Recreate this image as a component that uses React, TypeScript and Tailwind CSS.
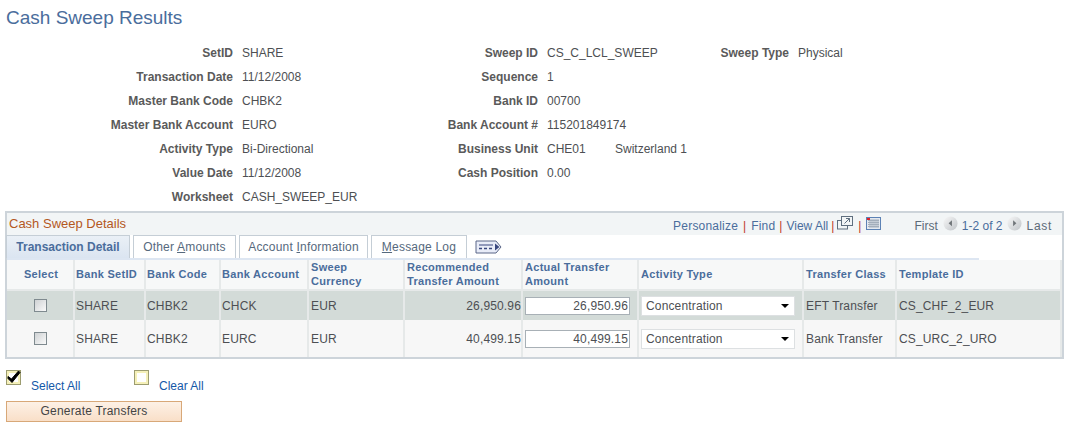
import React from 'react';

const font = { fontFamily: '"Liberation Sans", Arial, sans-serif' };

const summaryRows = [
  { label: 'SetID', value: 'SHARE', label2: 'Sweep ID', value2: 'CS_C_LCL_SWEEP', label3: 'Sweep Type', value3: 'Physical' },
  { label: 'Transaction Date', value: '11/12/2008', label2: 'Sequence', value2: '1' },
  { label: 'Master Bank Code', value: 'CHBK2', label2: 'Bank ID', value2: '00700' },
  { label: 'Master Bank Account', value: 'EURO', label2: 'Bank Account #', value2: '115201849174' },
  { label: 'Activity Type', value: 'Bi-Directional', label2: 'Business Unit', value2: 'CHE01', extra: 'Switzerland 1' },
  { label: 'Value Date', value: '11/12/2008', label2: 'Cash Position', value2: '0.00' },
  { label: 'Worksheet', value: 'CASH_SWEEP_EUR' },
];

const gridCols = 'grid grid-cols-[68px_71px_75px_88px_96px_118px_116px_165px_93px_1fr]';

const headers = [
  { text: 'Select', center: true },
  { text: 'Bank SetID', tight: true },
  { text: 'Bank Code', tight: true },
  { text: 'Bank Account', tight: true },
  { text: 'Sweep\nCurrency' },
  { text: 'Recommended\nTransfer Amount' },
  { text: 'Actual Transfer\nAmount' },
  { text: 'Activity Type' },
  { text: 'Transfer Class' },
  { text: 'Template ID' },
];

const rows = [
  { account: 'CHCK', recommended: '26,950.96', actual: '26,950.96', cls: 'EFT Transfer', template: 'CS_CHF_2_EUR', bg: 'bg-[#d3dbd8]', h: 'h-[29px]' },
  { account: 'EURC', recommended: '40,499.15', actual: '40,499.15', cls: 'Bank Transfer', template: 'CS_URC_2_URO', bg: 'bg-[#f7f7f7]', h: 'h-[37px]' },
];

const Checkbox = () => (
  <div className="w-[13px] h-[13px] border border-[#7f8a8f] bg-gradient-to-br from-[#cfd2d4] to-[#fafafa]" />
);

const Cell: React.FC<{ className?: string; tight?: boolean; children?: React.ReactNode }> = ({ className = '', tight, children }) => (
  <div className={`flex items-center border-r-2 border-[#e6e9e9] ${tight ? 'pl-[1px]' : 'pl-[2px]'} ${className}`}>{children}</div>
);

const NavArrow: React.FC<{ dir: 'left' | 'right' }> = ({ dir }) => (
  <svg width="15" height="15" viewBox="0 0 16 16" className="mb-[6px]">
    <defs>
      <linearGradient id={`nav-${dir}`} x1="0" y1="0" x2="1" y2="1">
        <stop offset="0" stopColor="#f8f8f8" />
        <stop offset="1" stopColor="#c0c4c8" />
      </linearGradient>
    </defs>
    <circle cx="8" cy="8" r="7.5" fill={`url(#nav-${dir})`} />
    <path d={dir === 'left' ? 'M9.5 4.5 L9.5 11 L6 7.8 Z' : 'M6.5 4.5 L6.5 11 L10 7.8 Z'} fill="#6f7478" />
  </svg>
);

const Tab: React.FC<{ width: string; children: React.ReactNode }> = ({ width, children }) => (
  <div className={`${width} h-[23px] mr-[3px] border border-b-0 border-[#c5ced6] bg-white flex items-center justify-center tracking-[0.2px] text-[#56697d]`}>
    {children}
  </div>
);

const Sep: React.FC<{ className?: string }> = ({ className = 'mx-[5px]' }) => <span className={`${className} text-[#c0392b]`}>|</span>;

export default function App() {
  return (
    <div className="w-[1072px] h-[426px] bg-white overflow-hidden text-[12px] text-[#4d4f53]" style={font}>
      <h1 className="pl-[6px] pt-[7px] h-[41px] text-[19px] leading-[21px] text-[#4a6d9c]">Cash Sweep Results</h1>

      <div className="flex flex-col">
        {summaryRows.map(r => (
          <div key={r.label} className="grid grid-cols-[233px_149px_138px_59px_174px_auto] gap-x-[9px] h-[24px] items-center leading-[14px] whitespace-nowrap">
            <div className="text-right font-bold text-[#5a5a5a]">{r.label}</div>
            <div>{r.value}</div>
            <div className="text-right font-bold text-[#5a5a5a]">{r.label2}</div>
            <div>{r.value2}</div>
            <div className={r.label3 ? 'text-right font-bold text-[#5a5a5a]' : ''}>{r.label3 || r.extra}</div>
            <div>{r.value3}</div>
          </div>
        ))}
      </div>

      <div className="mt-[2px] ml-[5px] w-[1059px] h-[148px] border-2 border-[#cdd4da]">
        <div className="h-[22px] bg-[#f2f5f6] flex items-center justify-between pl-[2px] pr-[10px]">
          <span className="text-[13px] text-[#b4581e]">Cash Sweep Details</span>
          <div className="flex items-center pt-[4px] text-[#4a6d9c]">
            <span className="tracking-[0.2px]">Personalize</span>
            <Sep />
            <span className="tracking-[0.2px]">Find</span>
            <Sep className="mx-[4px]" />
            <span>View All</span>
            <Sep className="mx-[3px]" />
            <svg width="16" height="14" viewBox="0 0 16 14" className="mb-[6px]" fill="none" stroke="#5f6f7f">
              <rect x="0.5" y="4.5" width="10" height="8.5" />
              <rect x="4.5" y="0.5" width="11" height="9" fill="#f2f5f6" />
              <path d="M7.5 7.5 L12.5 2.5 M9 2.5 H12.5 V6" />
            </svg>
            <Sep />
            <svg width="15" height="13" viewBox="0 0 15 13" className="mb-[6px]">
              <rect x="0.5" y="0.5" width="14" height="12" fill="#e4e9f0" stroke="#5c82b5" />
              <path d="M2 3.5 H13 M2 5.5 H13 M2 7.5 H13 M2 9.5 H13 M4 2 V11 M6 2 V11 M8 2 V11 M10 2 V11 M12 2 V11" stroke="#a3aebb" strokeWidth="1" />
              <rect x="1" y="1" width="3" height="2" fill="#e0222a" />
            </svg>
            <span className="ml-[33px] text-[#5d6a78]">First</span>
            <span className="ml-[5px]"><NavArrow dir="left" /></span>
            <span className="mx-[4px]">1-2 of 2</span>
            <NavArrow dir="right" />
            <span className="ml-[5px] tracking-[0.7px] text-[#5d6a78]">Last</span>
          </div>
        </div>

        <div className="flex items-end h-[23px]">
          <div className="w-[124px] h-[23px] -ml-[1px] mr-[3px] border border-b-0 border-[#c5ced6] bg-gradient-to-b from-[#eaf0f6] to-[#dbe5f1] flex items-center justify-center font-bold text-[#4a6d9c]">
            Transaction Detail
          </div>
          <Tab width="w-[103px]"><span>Other <u>A</u>mounts</span></Tab>
          <Tab width="w-[129px]"><span>Account <u>I</u>nformation</span></Tab>
          <Tab width="w-[96px]"><span><u>M</u>essage Log</span></Tab>
          <svg width="28" height="14" viewBox="0 0 28 14" className="ml-[5px] mb-[4px]">
            <path d="M1 1 H21 L26 7 L21 13 H1 Z" fill="#e8ecf8" stroke="#5b6788" />
            <path d="M4 5 H18" stroke="#39477e" strokeWidth="1" />
            <path d="M4 8.5 H7 M9 8.5 H12 M14 8.5 H17" stroke="#39477e" strokeWidth="1.5" />
            <path d="M20 3.5 L24.5 7 L20 10.5 Z" fill="#39477e" />
          </svg>
        </div>
        <div className="h-[2px] w-[972px] bg-[#dde6f2]" />

        <div className={`${gridCols} h-[31px] bg-[#f7f8f8] border-b-2 border-[#e6e9e9] font-bold text-[11px] leading-[14px] tracking-[0.3px] text-[#4a6d9c] whitespace-pre-line`}>
          {headers.map(h => (
            <Cell key={h.text} tight={h.tight} className={`pb-[1px] ${h.center ? 'justify-center' : ''}`}>{h.text}</Cell>
          ))}
        </div>

        {rows.map(r => (
          <div key={r.account} className={`${gridCols} ${r.h} ${r.bg} tracking-[0.15px]`}>
            <Cell className="justify-center"><div className="-ml-[2px]"><Checkbox /></div></Cell>
            <Cell tight>SHARE</Cell>
            <Cell tight>CHBK2</Cell>
            <Cell tight>{r.account}</Cell>
            <Cell>EUR</Cell>
            <Cell className="justify-end">{r.recommended}</Cell>
            <Cell>
              <div className="w-[105px] h-[18px] bg-white border border-[#a8b0b6] text-right pr-[1px] leading-[17px]">{r.actual}</div>
            </Cell>
            <Cell>
              <div className="w-[154px] h-[20px] bg-white border border-[#dde0e2] pl-[4px] pr-[5px] flex items-center justify-between">
                <span>Concentration</span>
                <span className="border-l-[4px] border-r-[4px] border-t-[4px] border-l-transparent border-r-transparent border-t-black" />
              </div>
            </Cell>
            <Cell>{r.cls}</Cell>
            <Cell className="border-r-0">{r.template}</Cell>
          </div>
        ))}
      </div>

      <div className="ml-[6px] mt-[11px] flex h-[25px]">
        <div className="flex w-[128px]">
          <svg width="15" height="15" viewBox="0 0 15 15">
            <rect x="0.5" y="0.5" width="14" height="14" fill="#fff" stroke="#9c9c70" strokeWidth="1" />
            <rect x="2" y="2" width="11" height="11" fill="none" stroke="#f5f0b8" strokeWidth="2" />
            <path d="M2 6.5 L5.5 9 L12.5 1 L14 2.5 L6 12.5 L2 8.5 Z" fill="#000" stroke="#000" strokeWidth="1" />
          </svg>
          <span className="ml-[10px] mt-[7px] text-[#1458a8]">Select All</span>
        </div>
        <div className="flex">
          <svg width="15" height="15" viewBox="0 0 15 15">
            <rect x="0.5" y="0.5" width="14" height="14" fill="#fff" stroke="#9c9c70" strokeWidth="1" />
            <rect x="2" y="2" width="11" height="11" fill="none" stroke="#f5f0b8" strokeWidth="2" />
          </svg>
          <span className="ml-[10px] mt-[7px] text-[#1458a8]">Clear All</span>
        </div>
      </div>

      <div className="ml-[6px] mt-[6px] w-[176px] h-[21px] border border-[#d8a878] bg-gradient-to-b from-[#fdf1e6] to-[#f9dfc8] flex items-center justify-center pb-[1px] tracking-[0.2px] text-[#444]">
        Generate Transfers
      </div>
    </div>
  );
}
